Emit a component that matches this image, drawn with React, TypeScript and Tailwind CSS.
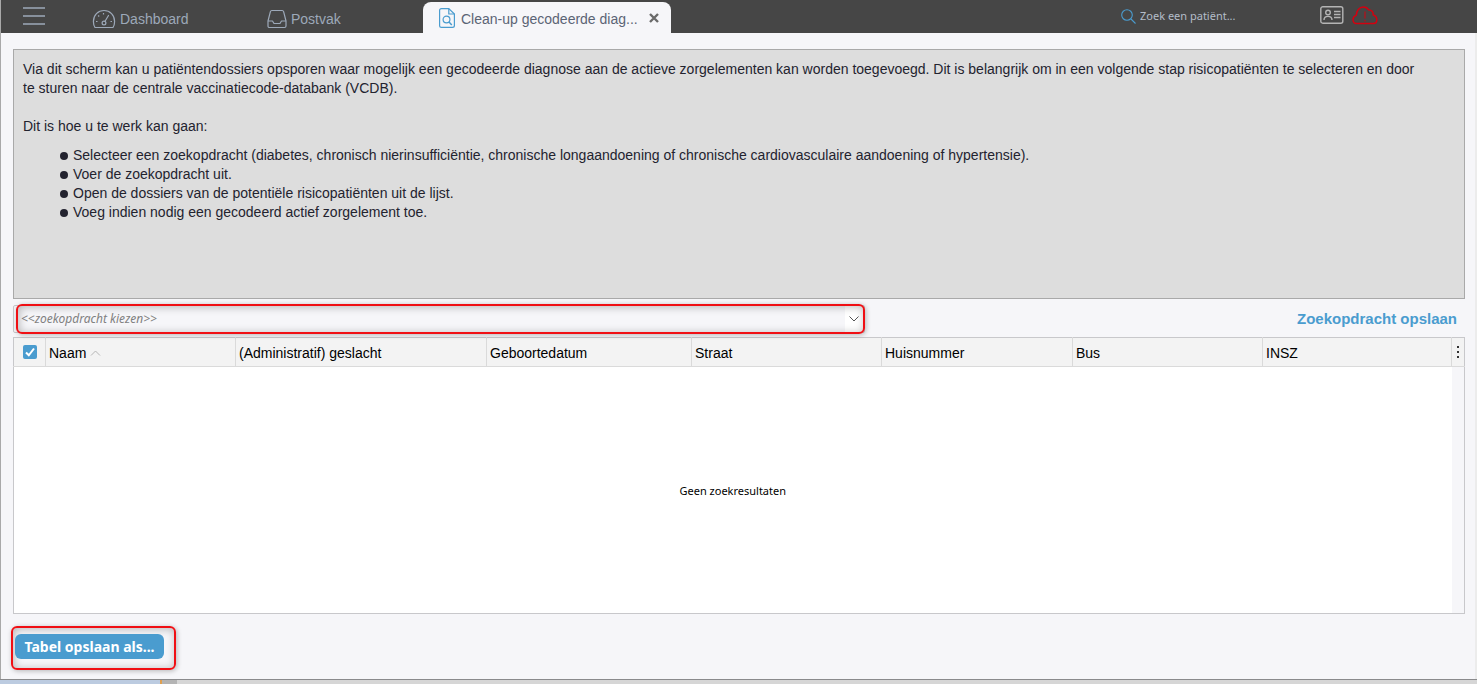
import React from "react";

const columns = [
  { label: "(Administratif) geslacht", width: "w-[251px]" },
  { label: "Geboortedatum", width: "w-[205px]" },
  { label: "Straat", width: "w-[190px]" },
  { label: "Huisnummer", width: "w-[191px]" },
  { label: "Bus", width: "w-[190px]" },
  { label: "INSZ", width: "" },
];

const steps = [
  "Selecteer een zoekopdracht (diabetes, chronisch nierinsufficiëntie, chronische longaandoening of chronische cardiovasculaire aandoening of hypertensie).",
  "Voer de zoekopdracht uit.",
  "Open de dossiers van de potentiële risicopatiënten uit de lijst.",
  "Voeg indien nodig een gecodeerd actief zorgelement toe.",
];

function DashboardIcon() {
  return (
    <svg width="24" height="20" viewBox="0 0 24 20" fill="none" stroke="currentColor" strokeWidth="1.2" aria-hidden="true">
      <path d="M3 18.5h18c1-1.6 1.6-3.800 1.600-6C22.600 6.200 18 1.500 12 1.500S1.400 6.200 1.400 12.500c0 2.200.6 4.400 1.600 6z" strokeLinejoin="round" />
      <circle cx="12" cy="14" r="1.900" />
      <path d="M13 12.300L16.500 6.500" strokeLinecap="round" />
      <path d="M4 12.500h1.500M18.500 12.500H20M6.200 6.500l1 1M11.500 4v1.500" />
    </svg>
  );
}

function InboxIcon() {
  return (
    <svg width="20" height="20" viewBox="0 0 20 20" fill="none" stroke="currentColor" strokeWidth="1.2" strokeLinejoin="round" aria-hidden="true">
      <path d="M1 12L3.400 2.600C3.600 1.900 4 1.500 4.800 1.500h10.400c.8 0 1.200.4 1.400 1.100L19 12v5c0 1-.6 1.500-1.500 1.500h-15C1.600 18.500 1 18 1 17z" />
      <path d="M1 12h4.500l1.500 2.500h6l1.500-2.500H19" />
    </svg>
  );
}

function FileSearchIcon() {
  return (
    <svg width="16" height="20" viewBox="0 0 16 20" fill="none" stroke="currentColor" strokeWidth="1.2" strokeLinejoin="round" aria-hidden="true">
      <path d="M2.500.6h7.300l5.600 5.400v11.500c0 1.200-.7 1.900-1.900 1.900h-11C1.300 19.400.6 18.700.6 17.500v-15C.6 1.300 1.300.6 2.500.6z" />
      <path d="M9.800.6V6h5.600" />
      <circle cx="7.500" cy="11.500" r="3.400" />
      <path d="M10 14l2.800 3" strokeWidth="1.500" />
    </svg>
  );
}

function CardIcon() {
  return (
    <svg width="24" height="18" viewBox="0 0 24 18" fill="none" stroke="currentColor" strokeWidth="1.400" aria-hidden="true">
      <rect x="0.800" y="0.800" width="22" height="16.400" rx="2" />
      <circle cx="8" cy="6.500" r="2.300" />
      <path d="M4 14c0-2.500 1.500-3.600 4-3.600s4 1.100 4 3.600M14 5.500h6.500M14 8.500h6.500M14 11.500h6.500" />
    </svg>
  );
}

function CloudAlertIcon() {
  return (
    <svg width="26" height="19" viewBox="0 0 26 19" fill="none" stroke="currentColor" strokeWidth="1.500" strokeLinejoin="round" aria-hidden="true">
      <path d="M4.500 17.500C2.200 17.500 1 15.800 1 13.800c0-2.200 1.200-3.800 3.200-4.400C4.400 4.600 7.300 1 11.300 1c2.600 0 4.400 1.200 5.400 3 2.900-.2 4.900 1.900 4.500 5 2.300.7 3.600 2.500 3.600 4.700 0 2.200-1.300 3.800-3.400 3.800z" />
      <path d="M13 5.500v7M13 14v1.500" strokeWidth="1" />
    </svg>
  );
}

function TopBar() {
  return (
    <header className="flex h-[33px] border-l border-[#a9a9a9] bg-[#464646] text-sm text-[#9da9b9]">
      <button aria-label="Menu" className="ml-[22px] flex h-8 w-6 items-center">
        <svg width="22" height="18" viewBox="0 0 22 18" stroke="currentColor" strokeWidth="1.300">
          <path d="M0 1h22M0 9h22M0 17h22" />
        </svg>
      </button>
      <nav className="flex">
        <a href="#dashboard" className="ml-[45px] flex w-[175px] items-center gap-1 pt-1">
          <DashboardIcon />
          Dashboard
        </a>
        <a href="#postvak" className="flex w-[156px] items-center gap-1 pt-1">
          <InboxIcon />
          Postvak
        </a>
        <div className="mt-0.5 flex w-[248px] items-center rounded-t-lg bg-[#f6f6f9] pt-px pr-3 pl-4 text-[#5b6475]">
          <span className="text-[#4a9ccf]">
            <FileSearchIcon />
          </span>
          <a href="#cleanup" className="ml-1.5 flex-1 pt-px whitespace-nowrap">
            Clean-up gecodeerde diag...
          </a>
          <button aria-label="Sluiten" className="text-[#6a6a6a]">
            <svg width="10" height="10" viewBox="0 0 10 10" stroke="currentColor" strokeWidth="2.400">
              <path d="M1 1l8 8M9 1L1 9" />
            </svg>
          </button>
        </div>
      </nav>
      <label className="ml-auto flex h-8 items-center gap-1">
        <svg width="15" height="15" viewBox="0 0 15 15" fill="none" stroke="#4a9ccf" strokeWidth="1.100" aria-hidden="true">
          <circle cx="6" cy="6" r="5.300" />
          <path d="M10 10l4.500 4.500" />
        </svg>
        <input
          type="text"
          placeholder="Zoek een patiënt..."
          className="w-[180px] bg-transparent font-['Noto_Sans',sans-serif] text-[11px] outline-none placeholder:text-[#b4bdc9]"
        />
      </label>
      <div className="mr-[99px] flex h-8 items-center gap-2 pb-0.5">
        <button aria-label="Identiteitskaart" className="text-[#b4b4b4]">
          <CardIcon />
        </button>
        <button aria-label="Verbinding" className="text-[#d4000f]">
          <CloudAlertIcon />
        </button>
      </div>
    </header>
  );
}

function Intro() {
  return (
    <section className="h-[250px] border border-[#a9a9a9] bg-[#dddddd] py-2.5 pr-6 pl-[9px] text-sm leading-[19px] text-[#23232f]">
      <p className="pr-3">
        Via dit scherm kan u patiëntendossiers opsporen waar mogelijk een gecodeerde diagnose aan de actieve
        zorgelementen kan worden toegevoegd. Dit is belangrijk om in een volgende stap risicopatiënten te selecteren en
        door te sturen naar de centrale vaccinatiecode-databank (VCDB).
      </p>
      <p className="mt-[19px]">Dit is hoe u te werk kan gaan:</p>
      <ul className="mt-2.5 pl-[37px]">
        {steps.map((step) => (
          <li key={step} className="flex items-center gap-[5px]">
            <span className="size-2 shrink-0 rounded-full bg-[#23232f]" />
            {step}
          </li>
        ))}
      </ul>
    </section>
  );
}

function ResultsTable() {
  return (
    <table className="w-full table-fixed border-collapse border border-[#c8c8cb] bg-white text-sm text-black">
      <thead>
        <tr className="h-[29px] border-b border-[#dadada] bg-[#f3f3f3] text-left">
          <th className="w-8 border-r border-[#dadada]">
            <label className="relative mx-auto block size-3.5">
              <input type="checkbox" defaultChecked aria-label="Alles selecteren" className="block size-3.5 appearance-none rounded-xs bg-[#4a9ccf]" />
              <svg className="pointer-events-none absolute inset-0" width="14" height="14" viewBox="0 0 14 14" fill="none" stroke="white" strokeWidth="2">
                <path d="M3 7.500l2.800 2.800L11 3.500" />
              </svg>
            </label>
          </th>
          <th className="w-[190px] border-r border-[#dadada] px-[3px] pt-0.5 font-normal">
            <button className="flex items-center gap-1">
              Naam
              <svg width="11" height="6" viewBox="0 0 11 6" fill="none" stroke="#b5b5b5">
                <path d="M1 5.500L5.500 1 10 5.500" />
              </svg>
            </button>
          </th>
          {columns.map((col) => (
            <th key={col.label} className={`${col.width} border-r border-[#dadada] px-[3px] pt-0.5 font-normal`}>
              {col.label}
            </th>
          ))}
          <th className="w-[13px]">
            <button aria-label="Kolommen" className="mx-auto flex flex-col gap-[3px]">
              <span className="size-0.5 bg-[#333]" />
              <span className="size-0.5 bg-[#333]" />
              <span className="size-0.5 bg-[#333]" />
            </button>
          </th>
        </tr>
      </thead>
      <tbody>
        <tr className="h-[247px]">
          <td colSpan={8} className="pt-0.5 text-center font-['Noto_Sans',sans-serif] text-[11px]">
            Geen zoekresultaten
          </td>
          <td className="bg-[#f6f6f9]" />
        </tr>
      </tbody>
    </table>
  );
}

export default function App() {
  return (
    <div className="flex min-h-screen flex-col bg-[#f6f6f9] font-['Liberation_Sans',Arial,sans-serif]">
      <TopBar />
      <main className="flex-1 border-r-2 border-l border-r-[#ececec] border-l-[#a9a9a9] pt-4 pr-2.5 pl-3">
        <Intro />
        <div className="flex h-[38px] items-center justify-between pt-0.5">
          <div className="relative w-[852px]">
            <select
              aria-label="Zoekopdracht"
              className="block h-7 w-full appearance-none rounded-xs border border-[#c8c8cb] bg-[#f6f6f9] px-[7px] font-['Noto_Sans',sans-serif] text-xs text-[#808080] italic"
            >
              <option>&lt;&lt;zoekopdracht kiezen&gt;&gt;</option>
            </select>
            <span className="pointer-events-none absolute inset-y-px right-0.5 flex w-[18px] items-center justify-center bg-white">
              <svg width="10" height="6" viewBox="0 0 10 6" fill="none" stroke="#555">
                <path d="M0.500 0.500L5 5 9.500 0.500" />
              </svg>
            </span>
            <span className="pointer-events-none absolute -inset-y-px right-0 left-[3px] rounded-md border-2 border-[#f00f14] shadow-[1px_1px_5px_#0004,inset_1px_1px_8px_#0004]" />
          </div>
          <button className="mr-2 text-[15px] font-bold text-[#4a9ccf]">Zoekopdracht opslaan</button>
        </div>
        <ResultsTable />
        <div className="mt-3 -ml-0.5 w-[165px] rounded-md border-2 border-[#f00f14] px-0.5 pt-1.5 pb-[9px] shadow-[1px_1px_5px_#0004,inset_1px_1px_8px_#0004]">
          <button className="block h-[25px] w-[149px] rounded-md bg-[#4a9ccf] font-['Noto_Sans',sans-serif] text-sm leading-[25px] font-bold text-white">
            Tabel opslaan als...
          </button>
        </div>
      </main>
      <footer className="flex h-[5px] border-t border-[#8a8a8c] bg-[#d6d6d6]">
        <span className="w-40 bg-[#bccbe0]" />
        <span className="w-0.5 bg-[#e0a050]" />
        <span className="w-[15px] bg-[#b4b4b4]" />
      </footer>
    </div>
  );
}
